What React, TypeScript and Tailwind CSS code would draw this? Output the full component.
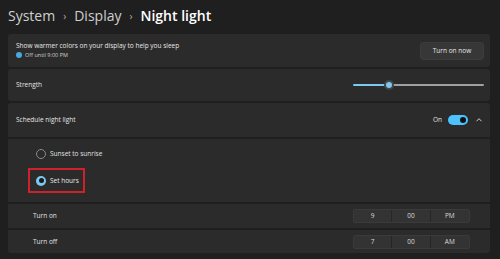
import React from "react";

const font = { fontFamily: '"Open Sans", "Noto Sans", Arial, sans-serif' };

function Radio({ checked }: { checked?: boolean }) {
  return checked ? (
    <span className="flex h-[10px] w-[10px] items-center justify-center rounded-full bg-[#7cc8f0]">
      <span className="h-[5px] w-[5px] rounded-full bg-[#1a1a1a]" />
    </span>
  ) : (
    <span className="h-[10px] w-[10px] rounded-full border border-[#8a8a8a]" />
  );
}

function TimePicker({ h, m, p }: { h: string; m: string; p: string }) {
  return (
    <div className="grid h-[14px] w-[117px] grid-cols-3 rounded-[2px] border border-[#3a3a3a] bg-[#333333] text-[6.5px] text-[#d8d8d8]">
      <span className="flex items-center justify-center border-r border-[#262626]">{h}</span>
      <span className="flex items-center justify-center border-r border-[#262626]">{m}</span>
      <span className="flex items-center justify-center">{p}</span>
    </div>
  );
}

export default function App() {
  return (
    <div className="h-[259px] w-[500px] overflow-hidden bg-[#1f1f1f] pl-[8px] pr-[10px] text-white" style={font}>
      <div className="flex h-[34px] items-center gap-[8px] pb-[3px] text-[14px] leading-none">
        <span className="text-[#cfcfcf]">System</span>
        <span className="text-[10px] text-[#b0b0b0]">›</span>
        <span className="text-[#cfcfcf]">Display</span>
        <span className="text-[10px] text-[#b0b0b0]">›</span>
        <span className="font-semibold text-white">Night light</span>
      </div>

      <div className="flex flex-col gap-[2px]">
        <div className="flex h-[33px] items-center justify-between rounded-[3px] bg-[#2b2b2b] pl-[8px] pr-[6px]">
          <div className="flex flex-col gap-[3px] leading-none">
            <span className="text-[6.5px] text-[#e6e6e6]">Show warmer colors on your display to help you sleep</span>
            <span className="flex items-center gap-[3px] text-[5.5px] text-[#d0d0d0]">
              <span className="h-[6px] w-[6px] rounded-full bg-[#4aa8de]" />
              Off until 9:00 PM
            </span>
          </div>
          <button className="flex h-[18px] w-[64px] items-center justify-center rounded-[3px] border border-[#3c3c3c] bg-[#373737] text-[6.5px] text-[#e6e6e6]">
            Turn on now
          </button>
        </div>

        <div className="flex h-[32px] items-center justify-between rounded-[3px] bg-[#2b2b2b] pl-[8px] pr-[6px]">
          <span className="text-[6.5px] text-[#e6e6e6]">Strength</span>
          <div className="relative flex h-[10px] w-[131px] items-center">
            <div className="h-[2px] w-[36px] rounded-l bg-[#7cc8f0]" />
            <div className="h-[2px] flex-1 rounded-r bg-[#a0a0a0]" />
            <span className="absolute left-[31px] flex h-[10px] w-[10px] items-center justify-center rounded-full bg-[#454545]">
              <span className="h-[6px] w-[6px] rounded-full bg-[#7cc8f0]" />
            </span>
          </div>
        </div>

        <div className="flex flex-col gap-[2px]">
          <div className="flex h-[34px] items-center justify-between rounded-t-[3px] bg-[#2b2b2b] pl-[8px] pr-[6px]">
            <span className="text-[6.5px] text-[#e6e6e6]">Schedule night light</span>
            <div className="flex items-center gap-[6px]">
              <span className="text-[6.5px] text-[#e0e0e0]">On</span>
              <span className="flex h-[10px] w-[20px] items-center justify-end rounded-full bg-[#4cc2ff] pr-[2px]">
                <span className="h-[6px] w-[6px] rounded-full bg-[#111111]" />
              </span>
              <svg width="10" height="10" viewBox="0 0 10 10" className="text-[#d0d0d0]">
                <path d="M2.5 6.2 L5 3.7 L7.5 6.2" fill="none" stroke="currentColor" strokeWidth="1" />
              </svg>
            </div>
          </div>

          <div className="flex h-[63px] flex-col items-start bg-[#2b2b2b] pl-[20px] pt-[10px]">
            <div className="flex h-[10px] items-center gap-[4px] pl-[8px] text-[6.5px] text-[#e0e0e0]">
              <Radio />
              <span>Sunset to sunrise</span>
            </div>
            <div className="mt-[9px] flex h-[25px] w-[57px] items-center gap-[4px] border-2 border-[#d0202a] pl-[6px] text-[6.5px] text-[#e8e8e8]">
              <Radio checked />
              <span>Set hours</span>
            </div>
          </div>

          <div className="flex h-[24px] items-center justify-between bg-[#2b2b2b] pl-[25px] pr-[20px]">
            <span className="text-[6.5px] text-[#e0e0e0]">Turn on</span>
            <TimePicker h="9" m="00" p="PM" />
          </div>
          <div className="flex h-[23px] items-center justify-between rounded-b-[3px] bg-[#2b2b2b] pl-[25px] pr-[20px]">
            <span className="text-[6.5px] text-[#e0e0e0]">Turn off</span>
            <TimePicker h="7" m="00" p="AM" />
          </div>
        </div>
      </div>
    </div>
  );
}
